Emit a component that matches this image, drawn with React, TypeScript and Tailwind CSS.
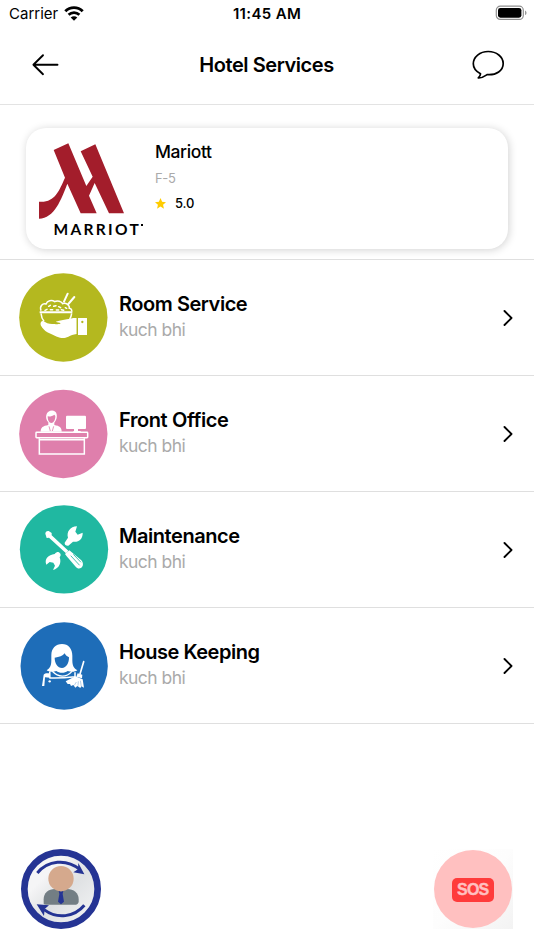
import React from "react";

function WifiIcon() {
  return (
    <svg className="mt-[-2px] h-[15px] w-[20px]" viewBox="0 0 20 15" fill="none" stroke="#000">
      <path d="M1.300 5.200C6.200.4 13.800.4 18.700 5.200" strokeWidth="2.900" />
      <path d="M4.600 8.800c3.100-3 7.700-3 10.800 0" strokeWidth="2.700" />
      <path d="M10 14.700 6.700 11.500c1.900-1.700 4.700-1.700 6.600 0Z" fill="#000" stroke="none" />
    </svg>
  );
}

function BatteryIcon() {
  return (
    <svg className="mt-[-2px] h-[16px] w-[32px]" viewBox="0 0 32 16" fill="none">
      <rect x="1.300" y="1.200" width="27" height="13.200" rx="4" stroke="#8f8f8f" strokeWidth="1.200" />
      <rect x="3" y="2.900" width="23.400" height="9.800" rx="2.400" fill="#000" />
      <path d="M30 5.400c2 .8 2 3.900 0 4.700Z" fill="#999" />
    </svg>
  );
}

function BackIcon() {
  return (
    <svg className="h-[24px] w-[30px]" viewBox="0 0 30 24" fill="none" stroke="#000" strokeWidth="1.900" strokeLinecap="round" strokeLinejoin="round">
      <path d="M13 2.200 3.400 11.700l9.600 9.500M3.500 11.700h24" />
    </svg>
  );
}

function ChatIcon() {
  return (
    <svg className="h-[32px] w-[34px]" viewBox="0 0 34 32" fill="none" stroke="#000" strokeWidth="1.700" strokeLinejoin="round">
      <path d="M17.200 2.500C8.900 2.500 2.300 7.900 2.300 14.800c0 4.200 3 7.800 7.200 10-.2 1.800-.9 2.900-2.200 4.100 3.900.3 6.200-1.600 8.700-3.300 9.500.8 16.200-4.200 16.200-11.100 0-6.700-6.700-12-15-12Z" />
    </svg>
  );
}

function HotelLogo() {
  return (
    <div className="w-[106px] shrink-0">
      <svg className="block h-[79px] w-[87px]" viewBox="72 83 261 237" fill="#a31d2b">
        <path d="M116 104 160 84 214 212 233 184 197 108 241 87 327 294H282L239 203 222 241 245 294H197L157 205C139 252 118 309 72 310V259C119 263 132 227 150 187Z" />
      </svg>
      <div className="ml-[14.500px] mt-[-3.500px] flex h-[20px] items-center whitespace-nowrap font-['Lato'] text-[15.500px] font-bold leading-[20px] tracking-[2.300px] text-black">
        MARRIOT
        <span className="mb-[8px] ml-[-0.500px] h-[2px] w-[2px] shrink-0 bg-black" />
      </div>
    </div>
  );
}

function RoomServiceIcon() {
  return (
    <svg className="size-[92px]" viewBox="24 21 276 276" fill="#fff">
      <circle cx="160" cy="157.500" r="132.500" fill="#b4b81f" />
      <path d="M93 137c-5-14 5-23 15-20 4-10 17-13 26-7 8-5 21-1 24 6 10-4 22 5 20 14 6 1 8 5 7 10" fill="none" stroke="#fff" strokeWidth="4.500" />
      <path d="m162 110 11-24M175 117l18-21" stroke="#fff" strokeWidth="6" strokeLinecap="round" />
      <path d="m116 124 5-3m10 3 7-2m8 3 6 3m-47 8 6-3m10 1h7m11 1h7m8-1 7 2m5-8 4 2" fill="none" stroke="#fff" strokeWidth="4.500" strokeLinecap="round" />
      <path d="M89 139h98v6H89z" />
      <path d="M93 145c1 10 4 18 9 24m83-24c-1 7-3 13-6 18" fill="none" stroke="#fff" strokeWidth="4.500" />
      <path d="M93 171c3-4 8-3 12 0 9 6 19 6 28 6 10 1 15 1 19-2-4-3-10-3-15-5 13-4 31-7 44-9 7-2 13-2 19-2v48c-11 1-17 5-25 8-12 6-22 5-34 0l-29-13c-8-5-15-12-18-18-3-5-3-9-1-13Z" />
      <rect x="204" y="159" width="27" height="51" rx="1" />
      <path d="M202 157v55" stroke="#b4b81f" strokeWidth="3" />
      <circle cx="217" cy="171" r="3.500" fill="#b4b81f" />
    </svg>
  );
}

function FrontOfficeIcon() {
  return (
    <svg className="size-[92px]" viewBox="24 24 276 276" fill="#fff">
      <circle cx="160" cy="162" r="132.500" fill="#df7fac" />
      <path d="M92 155c0-13 7-17 23-20v-8c-6-6-8-15-6-22 3-16 28-19 31-2 2 8-1 19-7 25v7c16 3 22 7 22 20Z" />
      <path d="M113 109c7 1 15-1 20-5l3 4c0 12-5 21-12 21s-11-9-11-20Z" fill="#df7fac" />
      <path d="m117 139 4 14m10-14-4 14" stroke="#df7fac" strokeWidth="2.500" />
      <rect x="168" y="107" width="60" height="40" rx="3" />
      <path d="M192 147h12v6h8v4h-22v-4h2Z" />
      <rect x="78" y="157" width="155" height="16" rx="2" fill="none" stroke="#fff" strokeWidth="4.500" />
      <path d="M88 175v47h135v-47M88 179h135" fill="none" stroke="#fff" strokeWidth="4.500" />
    </svg>
  );
}

function MaintenanceIcon() {
  return (
    <svg className="size-[92px]" viewBox="24 27 276 276" fill="#fff">
      <circle cx="162" cy="163" r="132.500" fill="#20b8a1" />
      <path d="M106 116c0-5 4-9 10-8l9 6v7l50 46-7 8-51-47-7 1Z" />
      <path d="M165 177 178 166 214 196c7 8 6 18 0 22-6 4-12 3-17-3l-27-31Z" />
      <path d="m183 183 25 27m-17-31 21 22" stroke="#20b8a1" strokeWidth="2.500" strokeLinecap="round" />
      <path d="M164 143 174 128c-5-17 6-33 27-34l-5 16 7 9 15-6c1 19-13 30-29 27l-14 12c-6 1-12-3-11-9Z" />
      <path d="M134 177c6-7 13-7 15-3 4 3 4 8 0 13 6 16-1 34-20 38l6-13-5-9-11-2-10 8c-7-17 6-30 25-32Z" />
    </svg>
  );
}

function HouseKeepingIcon() {
  return (
    <svg className="size-[92px]" viewBox="24 24 276 276" fill="#fff">
      <circle cx="162.500" cy="162" r="131" fill="#1e6db8" />
      <path d="M110 175c9-5 14-13 14-30v-15c0-21 13-34 32-34s31 14 31 35v14c0 17 5 24 15 30-8 5-17 6-29 2-9 7-25 7-34 0-10 4-21 3-29-2Z" />
      <path d="M134 137c14-2 24-5 30-13 2 6 8 9 13 12 0 18-8 32-21 32s-22-14-22-31Z" fill="#1e6db8" />
      <path d="M127 178c18 19 42 19 59 0" fill="none" stroke="#fff" strokeWidth="4" />
      <path d="M119 178c1 8 0 15 1 20 26 1 52-1 75-4v-13" fill="none" stroke="#fff" strokeWidth="4.500" />
      <path d="M101 188c4-5 10-5 18-4l1 13-15-1-2 26h-7Z" />
      <circle cx="119" cy="208" r="3.500" />
      <path d="m221 149-11 37" stroke="#fff" strokeWidth="5" strokeLinecap="round" />
      <path d="m203 184 14 4-1 11-17-5Z" />
      <path d="M196 193 218 202 222 227 214 223 211 228 202 222 196 227 190 219 183 222 180 216 173 216 167 208Z" />
      <path d="m199 210-6 10m12-12-1 13m7-15 3 17" stroke="#1e6db8" strokeWidth="1" />
    </svg>
  );
}

const services = [
  { title: "Room Service", tracking: "tracking-[-0.460px]", Icon: RoomServiceIcon },
  { title: "Front Office", tracking: "tracking-[-0.400px]", Icon: FrontOfficeIcon },
  { title: "Maintenance", tracking: "tracking-[-0.450px]", Icon: MaintenanceIcon },
  { title: "House Keeping", tracking: "tracking-[-0.460px]", Icon: HouseKeepingIcon },
];

function SwitchUserButton() {
  return (
    <button aria-label="Switch user">
      <svg className="block size-[82px]" viewBox="30 24 246 246">
        <defs>
          <linearGradient id="disc" x1="0" y1="0" x2="1" y2="1">
            <stop offset="0.3" stopColor="#f5f5f6" />
            <stop offset="0.55" stopColor="#dfe1e3" />
            <stop offset="0.9" stopColor="#f1f2f3" />
          </linearGradient>
        </defs>
        <circle cx="153" cy="147" r="110" fill="url(#disc)" stroke="#253494" strokeWidth="20" />
        <path d="M101 190v-12c0-20 14-31 34-31h36c20 0 35 12 35 31v6c0 5-3 10-8 10h-90c-5 0-7-1-7-4Z" fill="#737e84" />
        <path d="m146 152 7 3 7-3-2 10 4 23-9 8-9-8 4-23Z" fill="#253494" />
        <circle cx="153" cy="116" r="38" fill="#d5a98d" />
        <path d="M82 99c31-38 87-44 127-11" fill="none" stroke="#253494" strokeWidth="9" />
        <path d="m205 69 18 34-33-6 14-9Z" fill="#253494" />
        <path d="M223 196c-30 36-82 42-121 13" fill="none" stroke="#253494" strokeWidth="9" />
        <path d="m80 193 37 3-13 11-2 21Z" fill="#253494" />
      </svg>
    </button>
  );
}

function SosButton() {
  return (
    <button className="flex size-[80px] items-start justify-start bg-gradient-to-br from-white via-[#fdfdfd] to-[#f3f3f3] pl-px pt-px">
      <span className="flex size-[77.500px] items-center justify-center rounded-full bg-[#ffc0c0]">
        <span className="mt-[2px] flex h-[24px] w-[42px] items-center justify-center rounded-[5px] bg-[#ff3b3b] font-['Liberation_Sans'] text-[16px] font-bold leading-none text-[#ffc0c0] [-webkit-text-stroke:0.400px_#ffc0c0]">
          <span className="tracking-[-0.800px]">SOS</span>
        </span>
      </span>
    </button>
  );
}

export default function App() {
  return (
    <div className="flex h-[950px] w-[534px] flex-col overflow-hidden bg-white font-['Inter',sans-serif] text-black">
      <div className="grid h-[28px] grid-cols-3 items-center pl-[9px] pr-[7px]">
        <div className="flex items-center gap-[6px] text-[15px] leading-[28px]">
          Carrier <WifiIcon />
        </div>
        <div className="pr-[2px] text-center text-[15px] font-semibold tracking-[0.350px]">11:45 AM</div>
        <div className="flex justify-end">
          <BatteryIcon />
        </div>
      </div>

      <header className="flex h-[77px] items-center justify-between border-b border-[#e3e3e3] pb-[2px] pl-[30px] pr-[29px]">
        <button aria-label="Back"><BackIcon /></button>
        <h1 className="pl-[2px] text-[20px] font-semibold tracking-[-0.430px]">Hotel Services</h1>
        <button aria-label="Chat"><ChatIcon /></button>
      </header>

      <section className="h-[155px] border-b border-[#dfdfdf] px-[26px] pt-[23px]">
        <div className="flex h-[121px] rounded-[20px] bg-white pl-[13px] pt-[15px] shadow-[1px_1px_8px_rgba(0,0,0,0.18)]">
          <HotelLogo />
          <div className="ml-[10px] mt-[-1px]">
            <div className="text-[17.500px] font-medium leading-[20px] tracking-[-0.400px]">Mariott</div>
            <div className="mt-[8px] text-[13px] leading-[16px] tracking-[-0.300px] text-[#aaa]">F-5</div>
            <div className="mt-[9px] flex items-center gap-[9px] text-[13px] font-medium leading-[16px] tracking-[-0.150px]">
              <svg className="size-[11px]" viewBox="0 0 24 24" fill="#fc0">
                <path d="m12 0 3.500 8.300 8.500.700-6.400 5.700 1.900 8.800L12 18.800l-7.500 4.700 1.900-8.800L0 9l8.500-.7Z" />
              </svg>
              5.0
            </div>
          </div>
        </div>
      </section>

      <ul>
        {services.map(({ title, tracking, Icon }) => (
          <li key={title} className="flex h-[116px] items-center border-b border-[#dfdfdf] pl-[18px] pr-[20px]">
            <Icon />
            <div className="mb-[1px] ml-[9px] flex-1">
              <div className={`text-[20px] font-semibold leading-[26px] ${tracking}`}>{title}</div>
              <div className="text-[17.500px] leading-[26px] tracking-[-0.550px] text-[#aaa]">kuch bhi</div>
            </div>
            <svg className="h-[18px] w-[12px]" viewBox="0 0 12 18" fill="none" stroke="#000" strokeWidth="1.900" strokeLinecap="round" strokeLinejoin="round">
              <path d="m2.500 2 7 7-7 7" />
            </svg>
          </li>
        ))}
      </ul>

      <footer className="mt-auto flex items-center justify-between pb-[20px] pl-[20px] pr-[21px]">
        <SwitchUserButton />
        <SosButton />
      </footer>
    </div>
  );
}
